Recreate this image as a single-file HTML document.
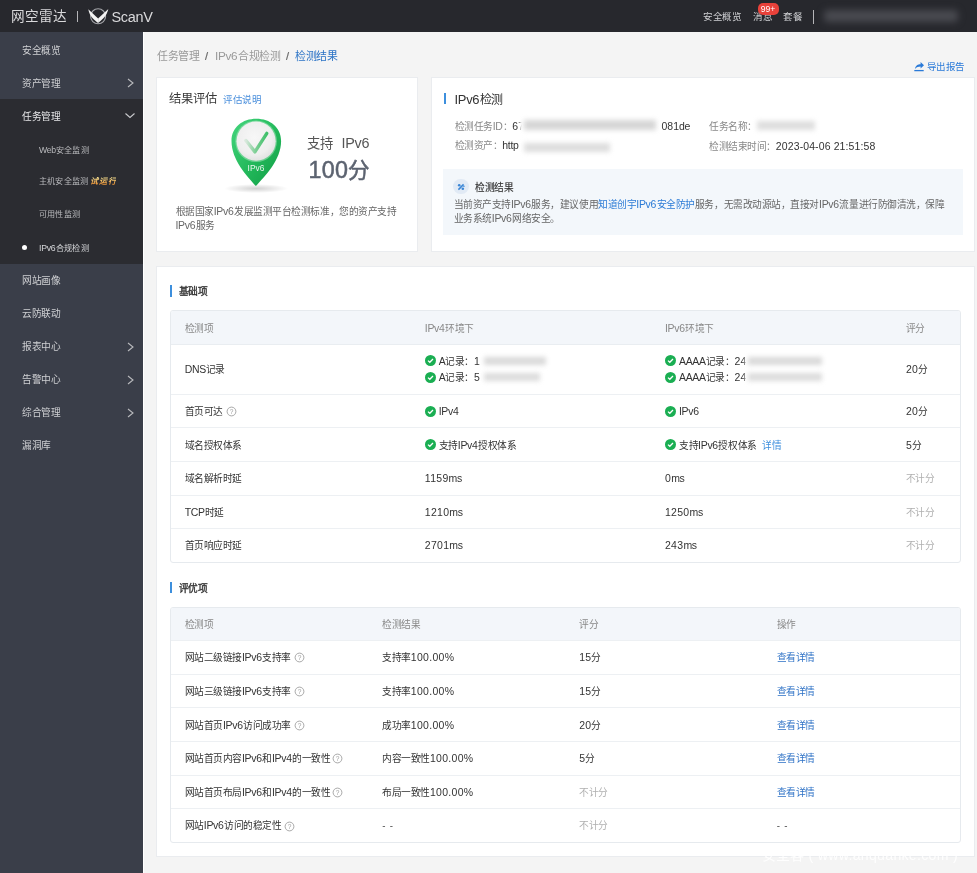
<!DOCTYPE html>
<html lang="zh-CN">
<head>
<meta charset="utf-8">
<style>
*{margin:0;padding:0;box-sizing:border-box;}
html,body{width:977px;height:873px;overflow:hidden;background:#f4f4f4;font-family:"Liberation Sans",sans-serif;}
.a{position:absolute;white-space:nowrap;}
</style>
</head>
<body>
<div style="position:absolute;left:0;top:0;width:977px;height:873px;overflow:hidden;will-change:transform">
<div class="a" style="left:0;top:0;width:977px;height:32px;background:#27282d;"></div>
<div class="a" style="left:11px;top:7.80px;font-size:13.6px;line-height:17px;letter-spacing:0px;color:#d9d9db;">网空雷达</div>
<div class="a" style="left:77px;top:11px;width:1.3px;height:11px;background:#b5b5b8;"></div>
<svg class="a" style="left:84px;top:4px" width="30" height="24" viewBox="0 0 30 24">
<circle cx="14.1" cy="12.3" r="7.5" fill="none" stroke="#a5a6aa" stroke-width="1.1"/>
<path d="M4.3,5.2 L14.1,14.5 L14.1,19.0 C11,16.5 5.5,12.5 4.3,5.2 Z" fill="#f4f4f4"/>
<path d="M24.3,5.1 L14.1,14.5 L14.1,19.0 C17.2,16.5 22.9,12.5 24.3,5.1 Z" fill="#f4f4f4"/>
</svg>
<div class="a" style="left:111.5px;top:9.30px;font-size:13.4px;line-height:17px;letter-spacing:-0.45px;color:#d9d9db;"><span style="letter-spacing:-0.3px;font-size:1.08em">ScanV</span></div>
<div class="a" style="left:703px;top:10.70px;font-size:9.5px;line-height:12px;letter-spacing:-0.45px;color:#cfd0d3;">安全概览</div>
<div class="a" style="left:753px;top:10.70px;font-size:9.5px;line-height:12px;letter-spacing:-0.45px;color:#cfd0d3;">消息</div>
<div class="a" style="left:757.5px;top:2.5px;width:21px;height:12px;background:#e8413a;border-radius:5px;color:#fff;font-size:8.6px;line-height:12px;text-align:center;">99+</div>
<div class="a" style="left:783px;top:10.70px;font-size:9.5px;line-height:12px;letter-spacing:-0.45px;color:#cfd0d3;">套餐</div>
<div class="a" style="left:812.5px;top:9.5px;width:1.3px;height:14px;background:#b5b5b8;"></div>
<div class="a" style="left:824px;top:10px;width:134px;height:12px;background:#494a50;filter:blur(3.5px);border-radius:4px;"></div>
<div class="a" style="left:0;top:32px;width:143px;height:841px;background:#3a3e49;"></div>
<div class="a" style="left:0;top:99px;width:143px;height:165px;background:#2b2c31;"></div>
<div class="a" style="left:143px;top:32px;width:1px;height:841px;background:#fff;"></div>
<div class="a" style="left:22px;top:45.00px;font-size:9.7px;line-height:12px;letter-spacing:-0.45px;color:#cfd0d3;">安全概览</div>
<div class="a" style="left:22px;top:78.00px;font-size:9.7px;line-height:12px;letter-spacing:-0.45px;color:#cfd0d3;">资产管理</div>
<svg class="a" style="left:126px;top:77.0px" width="10" height="12" viewBox="0 0 10 12"><polyline points="2,2 7,6 2,10" fill="none" stroke="#b9babd" stroke-width="1.1"/></svg>
<div class="a" style="left:22px;top:111.00px;font-size:9.7px;line-height:12px;letter-spacing:-0.45px;color:#e6e6e8;">任务管理</div>
<svg class="a" style="left:124px;top:110.0px" width="12" height="12" viewBox="0 0 12 12"><polyline points="1.5,3.5 6,7.5 10.5,3.5" fill="none" stroke="#c9cacd" stroke-width="1.1"/></svg>
<div class="a" style="left:39px;top:143.70px;font-size:8.1px;line-height:12px;letter-spacing:0.2px;color:#b9babd;"><span style="letter-spacing:-0.3px;font-size:1.08em">Web</span>安全监测</div>
<div class="a" style="left:39px;top:176.00px;font-size:8.1px;line-height:12px;letter-spacing:0.2px;color:#b9babd;">主机安全监测</div>
<div class="a" style="left:90.2px;top:176.00px;font-size:8.1px;line-height:12px;letter-spacing:0.7px;color:transparent;font-weight:bold;font-style:italic;background:linear-gradient(#fbe08c 20%,#f3a040 60%,#ef8a2a);-webkit-background-clip:text;background-clip:text;">试运行</div>
<div class="a" style="left:39px;top:209.00px;font-size:8.1px;line-height:12px;letter-spacing:0.2px;color:#b9babd;">可用性监测</div>
<div class="a" style="left:39px;top:242.00px;font-size:8.1px;line-height:12px;letter-spacing:0.2px;color:#d5d6d9;"><span style="letter-spacing:-0.3px;font-size:1.08em">IPv</span><span style="letter-spacing:0.3px;font-size:1.08em">6</span>合规检测</div>
<div class="a" style="left:22px;top:245.3px;width:5px;height:5px;border-radius:50%;background:#fff;"></div>
<div class="a" style="left:22px;top:274.70px;font-size:9.7px;line-height:12px;letter-spacing:-0.45px;color:#cfd0d3;">网站画像</div>
<div class="a" style="left:22px;top:307.70px;font-size:9.7px;line-height:12px;letter-spacing:-0.45px;color:#cfd0d3;">云防联动</div>
<div class="a" style="left:22px;top:340.70px;font-size:9.7px;line-height:12px;letter-spacing:-0.45px;color:#cfd0d3;">报表中心</div>
<svg class="a" style="left:126px;top:340.5px" width="10" height="12" viewBox="0 0 10 12"><polyline points="2,2 7,6 2,10" fill="none" stroke="#b9babd" stroke-width="1.1"/></svg>
<div class="a" style="left:22px;top:373.70px;font-size:9.7px;line-height:12px;letter-spacing:-0.45px;color:#cfd0d3;">告警中心</div>
<svg class="a" style="left:126px;top:373.5px" width="10" height="12" viewBox="0 0 10 12"><polyline points="2,2 7,6 2,10" fill="none" stroke="#b9babd" stroke-width="1.1"/></svg>
<div class="a" style="left:22px;top:406.70px;font-size:9.7px;line-height:12px;letter-spacing:-0.45px;color:#cfd0d3;">综合管理</div>
<svg class="a" style="left:126px;top:406.5px" width="10" height="12" viewBox="0 0 10 12"><polyline points="2,2 7,6 2,10" fill="none" stroke="#b9babd" stroke-width="1.1"/></svg>
<div class="a" style="left:22px;top:439.70px;font-size:9.7px;line-height:12px;letter-spacing:-0.45px;color:#cfd0d3;">漏洞库</div>
<div class="a" style="left:157px;top:49.30px;font-size:10.9px;line-height:14px;letter-spacing:-0.45px;color:#999;">任务管理</div>
<div class="a" style="left:205px;top:49.30px;font-size:11px;line-height:14px;letter-spacing:-0.45px;color:#666;-webkit-text-stroke:0.2px #666;">/</div>
<div class="a" style="left:215px;top:49.30px;font-size:10.9px;line-height:14px;letter-spacing:-0.45px;color:#999;"><span style="letter-spacing:-0.3px;font-size:1.08em">IPv</span><span style="letter-spacing:0.3px;font-size:1.08em">6</span>合规检测</div>
<div class="a" style="left:286px;top:49.30px;font-size:11px;line-height:14px;letter-spacing:-0.45px;color:#666;-webkit-text-stroke:0.2px #666;">/</div>
<div class="a" style="left:295.3px;top:49.30px;font-size:10.9px;line-height:14px;letter-spacing:-0.45px;color:#2b73c6;">检测结果</div>
<svg class="a" style="left:913px;top:60px" width="12" height="12" viewBox="0 0 12 12">
<path d="M1.3,10.6 L10.7,10.6" stroke="#2a7ad8" stroke-width="1.3"/>
<path d="M2,9 C2.5,5.5 5,4.2 7.6,4.2 L7.6,2 L11,5.3 L7.6,8.6 L7.6,6.4 C5.5,6.4 3.5,7 2,9 Z" fill="#2a7ad8"/>
</svg>
<div class="a" style="left:926.8px;top:61.30px;font-size:9.5px;line-height:12px;letter-spacing:-0.45px;color:#2a7ad8;">导出报告</div>
<div class="a" style="left:156px;top:77px;width:262px;height:175px;background:#fff;border:1px solid #eaecef;"></div>
<div class="a" style="left:168.6px;top:91.70px;font-size:12.3px;line-height:15px;letter-spacing:0.15px;color:#3a3a3a;">结果评估</div>
<div class="a" style="left:223.3px;top:93.60px;font-size:9.5px;line-height:12px;letter-spacing:-0.45px;color:#4a8fdc;">评估说明</div>
<svg class="a" style="left:215px;top:110px" width="82" height="86" viewBox="0 0 82 86">
<defs>
<linearGradient id="pg" x1="0" y1="0" x2="1" y2="1">
<stop offset="0" stop-color="#45d67e"/><stop offset="0.55" stop-color="#22b85a"/><stop offset="1" stop-color="#119c45"/>
</linearGradient>
<radialGradient id="wg" cx="0.45" cy="0.4" r="0.6">
<stop offset="0" stop-color="#f7f7f7"/><stop offset="0.75" stop-color="#eeeeee"/><stop offset="1" stop-color="#e2e2e2"/>
</radialGradient>
<linearGradient id="cg" x1="0" y1="0" x2="1" y2="0">
<stop offset="0" stop-color="#d8e8dc"/><stop offset="0.45" stop-color="#7fcf96"/><stop offset="1" stop-color="#3fc06a"/>
</linearGradient>
<radialGradient id="sg" cx="0.5" cy="0.5" r="0.5">
<stop offset="0" stop-color="#000" stop-opacity="0.18"/><stop offset="1" stop-color="#000" stop-opacity="0"/>
</radialGradient>
</defs>
<ellipse cx="41" cy="78.5" rx="32" ry="4.5" fill="url(#sg)"/>
<path d="M40.9,76.1 C32,66 16.5,50 16.5,31 C16.5,17 27.5,8.65 41.3,8.65 C55,8.65 66.1,17 66.1,31 C66.1,50 50,66 40.9,76.1 Z" fill="url(#pg)"/>
<circle cx="41.1" cy="31.2" r="20.8" fill="#a8e6bd" opacity="0.55"/>
<circle cx="41.1" cy="31.2" r="19.6" fill="url(#wg)"/>
<path d="M30.9,30.5 L39.9,41.9 L51.8,23.4" fill="none" stroke="url(#cg)" stroke-width="3.4" stroke-linejoin="round" stroke-linecap="round"/>
<text x="41" y="61.4" font-size="8.4" text-anchor="middle" fill="#fff" fill-opacity="0.9" font-family="Liberation Sans">IPv6</text>
</svg>
<div class="a" style="left:307px;top:135.20px;font-size:13.3px;line-height:16px;letter-spacing:-0.2px;color:#555;">支持<span style="display:inline-block;width:9px"></span><span style="letter-spacing:-0.3px;font-size:1.08em">IPv</span><span style="letter-spacing:0.3px;font-size:1.08em">6</span></div>
<div class="a" style="left:308.5px;top:157.50px;font-size:21.6px;line-height:24px;letter-spacing:-0.45px;color:#5c6370;-webkit-text-stroke:0.5px #5c6370;"><span style="letter-spacing:0.3px;font-size:1.08em">100</span>分</div>
<div class="a" style="left:175.5px;top:206.30px;font-size:9.7px;line-height:12px;letter-spacing:-0.45px;color:#666;">根据国家<span style="letter-spacing:-0.3px;font-size:1.08em">IPv</span><span style="letter-spacing:0.3px;font-size:1.08em">6</span>发展监测平台检测标准，您的资产支持</div>
<div class="a" style="left:175.5px;top:220.20px;font-size:9.7px;line-height:12px;letter-spacing:-0.45px;color:#666;"><span style="letter-spacing:-0.3px;font-size:1.08em">IPv</span><span style="letter-spacing:0.3px;font-size:1.08em">6</span>服务</div>
<div class="a" style="left:431px;top:77px;width:544px;height:175px;background:#fff;border:1px solid #eaecef;"></div>
<div class="a" style="left:444px;top:92.8px;width:2px;height:11px;background:#3d8fdd;"></div>
<div class="a" style="left:454.5px;top:91.70px;font-size:12px;line-height:15px;letter-spacing:-0.45px;color:#333;"><span style="letter-spacing:-0.3px;font-size:1.08em">IPv</span><span style="letter-spacing:0.3px;font-size:1.08em">6</span>检测</div>
<div class="a" style="left:454.5px;top:120.50px;font-size:9.7px;line-height:12px;letter-spacing:-0.45px;color:#888;">检测任务<span style="letter-spacing:-0.3px;font-size:1.08em">ID</span>：<span style="color:#333"><span style="letter-spacing:0.3px;font-size:1.08em">67</span></span></div>
<div class="a" style="left:454.5px;top:140.30px;font-size:9.7px;line-height:12px;letter-spacing:-0.45px;color:#888;">检测资产：<span style="color:#333"><span style="letter-spacing:-0.3px;font-size:1.08em">http</span></span></div>
<div class="a" style="left:520px;top:112px;width:141px;height:29px;background:#fff;filter:blur(1px);"></div>
<div class="a" style="left:524px;top:120px;width:132px;height:10px;background:#d6d6d6;filter:blur(2.5px);"></div>
<div class="a" style="left:661.5px;top:120.50px;font-size:9.7px;line-height:12px;letter-spacing:-0.45px;color:#333;"><span style="letter-spacing:0px;font-size:1.08em">081</span><span style="letter-spacing:-0.3px;font-size:1.08em">de</span></div>
<div class="a" style="left:520px;top:141px;width:94px;height:14px;background:#fff;filter:blur(1px);"></div>
<div class="a" style="left:524px;top:142.5px;width:86px;height:9px;background:#dddddd;filter:blur(2.5px);"></div>
<div class="a" style="left:709px;top:120.50px;font-size:9.7px;line-height:12px;letter-spacing:-0.45px;color:#888;">任务名称：</div>
<div class="a" style="left:753px;top:116px;width:66px;height:18px;background:#fff;filter:blur(1px);"></div>
<div class="a" style="left:757px;top:120.5px;width:58px;height:9px;background:#dedede;filter:blur(2.5px);"></div>
<div class="a" style="left:709px;top:140.50px;font-size:9.7px;line-height:12px;letter-spacing:-0.45px;color:#888;">检测结束时间：<span style="color:#333"><span style="letter-spacing:0.12px;font-size:1.08em">2023-04-06 21:51:58</span></span></div>
<div class="a" style="left:443px;top:168.8px;width:520px;height:66px;background:#f3f7fb;"></div>
<div class="a" style="left:453px;top:178.8px;width:15.6px;height:15.6px;border-radius:50%;background:#e1eaf5;"></div>
<svg class="a" style="left:456px;top:181.8px" width="10" height="10" viewBox="0 0 10 10">
<path d="M7.6,2.4 L2.4,7.6" stroke="#3a86d6" stroke-width="1.5"/><circle cx="3.2" cy="3.2" r="1.3" fill="#3a86d6"/><circle cx="6.8" cy="6.8" r="1.3" fill="#3a86d6"/><circle cx="7.9" cy="4.2" r="0.8" fill="#3a86d6"/>
</svg>
<div class="a" style="left:475.3px;top:182.30px;font-size:9.7px;line-height:12px;letter-spacing:-0.45px;color:#333;-webkit-text-stroke:0.15px #333;">检测结果</div>
<div class="a" style="left:453.6px;top:198.80px;font-size:9.7px;line-height:12px;letter-spacing:-0.45px;color:#666;">当前资产支持<span style="letter-spacing:-0.3px;font-size:1.08em">IPv</span><span style="letter-spacing:0.3px;font-size:1.08em">6</span>服务，建议使用<span style="color:#2b7bd6">知道创宇<span style="letter-spacing:-0.3px;font-size:1.08em">IPv</span><span style="letter-spacing:0.3px;font-size:1.08em">6</span>安全防护</span>服务，无需改动源站，直接对<span style="letter-spacing:-0.3px;font-size:1.08em">IPv</span><span style="letter-spacing:0.3px;font-size:1.08em">6</span>流量进行防御清洗，保障</div>
<div class="a" style="left:453.6px;top:212.90px;font-size:9.7px;line-height:12px;letter-spacing:-0.45px;color:#666;">业务系统<span style="letter-spacing:-0.3px;font-size:1.08em">IPv</span><span style="letter-spacing:0.3px;font-size:1.08em">6</span>网络安全。</div>
<div class="a" style="left:156px;top:266px;width:819px;height:591px;background:#fff;border:1px solid #eaecef;"></div>
<div class="a" style="left:170px;top:285.3px;width:2px;height:11.3px;background:#3d8fdd;"></div>
<div class="a" style="left:178.9px;top:286.00px;font-size:9.7px;line-height:12px;letter-spacing:-0.45px;color:#333;-webkit-text-stroke:0.35px #333;">基础项</div>
<div class="a" style="left:170px;top:582px;width:2px;height:11.3px;background:#3d8fdd;"></div>
<div class="a" style="left:178.6px;top:582.80px;font-size:9.7px;line-height:12px;letter-spacing:-0.45px;color:#333;-webkit-text-stroke:0.35px #333;">评优项</div>
<div class="a" style="left:170px;top:310px;width:791px;height:253.00000000000006px;border:1px solid #e6eaee;border-radius:3px;background:#fff;"></div>
<div class="a" style="left:171px;top:311px;width:789px;height:33.5px;background:#f3f6fa;border-radius:2px 2px 0 0;"></div>
<div class="a" style="left:171px;top:344.0px;width:789px;height:1px;background:#e9edf1;"></div>
<div class="a" style="left:171px;top:393.7px;width:789px;height:1px;background:#edf0f3;"></div>
<div class="a" style="left:171px;top:427.3px;width:789px;height:1px;background:#edf0f3;"></div>
<div class="a" style="left:171px;top:460.9px;width:789px;height:1px;background:#edf0f3;"></div>
<div class="a" style="left:171px;top:494.5px;width:789px;height:1px;background:#edf0f3;"></div>
<div class="a" style="left:171px;top:528.1px;width:789px;height:1px;background:#edf0f3;"></div>
<div class="a" style="left:184.7px;top:322.50px;font-size:9.7px;line-height:12px;letter-spacing:-0.45px;color:#888;">检测项</div>
<div class="a" style="left:424.8px;top:322.50px;font-size:9.7px;line-height:12px;letter-spacing:-0.45px;color:#888;"><span style="letter-spacing:-0.3px;font-size:1.08em">IPv</span><span style="letter-spacing:0.3px;font-size:1.08em">4</span>环境下</div>
<div class="a" style="left:665px;top:322.50px;font-size:9.7px;line-height:12px;letter-spacing:-0.45px;color:#888;"><span style="letter-spacing:-0.3px;font-size:1.08em">IPv</span><span style="letter-spacing:0.3px;font-size:1.08em">6</span>环境下</div>
<div class="a" style="left:905.9px;top:322.50px;font-size:9.7px;line-height:12px;letter-spacing:-0.45px;color:#888;">评分</div>
<div class="a" style="left:184.7px;top:364.40px;font-size:9.7px;line-height:12px;letter-spacing:-0.45px;color:#333;"><span style="letter-spacing:-0.3px;font-size:1.08em">DNS</span>记录</div>
<svg class="a" style="left:424.8px;top:355.4px" width="11" height="11" viewBox="0 0 11 11"><circle cx="5.5" cy="5.5" r="5.5" fill="#1aae52"/><polyline points="3,5.6 4.8,7.3 8,4" fill="none" stroke="#fff" stroke-width="1.3"/></svg>
<div class="a" style="left:438.7px;top:355.90px;font-size:9.7px;line-height:12px;letter-spacing:-0.45px;color:#333;"><span style="letter-spacing:-0.3px;font-size:1.08em">A</span>记录：<span style="letter-spacing:0.3px;font-size:1.08em">1</span></div>
<svg class="a" style="left:424.8px;top:371.7px" width="11" height="11" viewBox="0 0 11 11"><circle cx="5.5" cy="5.5" r="5.5" fill="#1aae52"/><polyline points="3,5.6 4.8,7.3 8,4" fill="none" stroke="#fff" stroke-width="1.3"/></svg>
<div class="a" style="left:438.7px;top:372.20px;font-size:9.7px;line-height:12px;letter-spacing:-0.45px;color:#333;"><span style="letter-spacing:-0.3px;font-size:1.08em">A</span>记录：<span style="letter-spacing:0.3px;font-size:1.08em">5</span></div>
<div class="a" style="left:480.5px;top:352.7px;width:70.5px;height:30.3px;background:#fff;filter:blur(1px);"></div>
<div class="a" style="left:484px;top:356.5px;width:62px;height:8.5px;background:#d9d9d9;filter:blur(2.5px);"></div>
<div class="a" style="left:484px;top:372.8px;width:56px;height:8.5px;background:#dcdcdc;filter:blur(2.5px);"></div>
<svg class="a" style="left:665px;top:355.4px" width="11" height="11" viewBox="0 0 11 11"><circle cx="5.5" cy="5.5" r="5.5" fill="#1aae52"/><polyline points="3,5.6 4.8,7.3 8,4" fill="none" stroke="#fff" stroke-width="1.3"/></svg>
<div class="a" style="left:679px;top:355.90px;font-size:9.7px;line-height:12px;letter-spacing:-0.45px;color:#333;"><span style="letter-spacing:-0.3px;font-size:1.08em">AAAA</span>记录：<span style="letter-spacing:0.3px;font-size:1.08em">24</span></div>
<svg class="a" style="left:665px;top:371.7px" width="11" height="11" viewBox="0 0 11 11"><circle cx="5.5" cy="5.5" r="5.5" fill="#1aae52"/><polyline points="3,5.6 4.8,7.3 8,4" fill="none" stroke="#fff" stroke-width="1.3"/></svg>
<div class="a" style="left:679px;top:372.20px;font-size:9.7px;line-height:12px;letter-spacing:-0.45px;color:#333;"><span style="letter-spacing:-0.3px;font-size:1.08em">AAAA</span>记录：<span style="letter-spacing:0.3px;font-size:1.08em">24</span></div>
<div class="a" style="left:745px;top:352.4px;width:81px;height:30px;background:#fff;filter:blur(1px);"></div>
<div class="a" style="left:748px;top:356.5px;width:74px;height:8.5px;background:#d9d9d9;filter:blur(2.5px);"></div>
<div class="a" style="left:748px;top:372.8px;width:74px;height:8.5px;background:#dcdcdc;filter:blur(2.5px);"></div>
<div class="a" style="left:905.9px;top:364.40px;font-size:9.7px;line-height:12px;letter-spacing:-0.45px;color:#333;"><span style="letter-spacing:0.3px;font-size:1.08em">20</span>分</div>
<div class="a" style="left:184.7px;top:406.00px;font-size:9.7px;line-height:12px;letter-spacing:-0.45px;color:#333;">首页可达</div>
<svg class="a" style="left:226.1px;top:406.0px" width="11" height="11" viewBox="0 0 11 11"><circle cx="5.5" cy="5.5" r="4.4" fill="none" stroke="#9a9a9a" stroke-width="0.85"/><text x="5.5" y="7.9" font-size="6.6" text-anchor="middle" fill="#9a9a9a" font-family="Liberation Sans">?</text></svg>
<svg class="a" style="left:424.8px;top:405.5px" width="11" height="11" viewBox="0 0 11 11"><circle cx="5.5" cy="5.5" r="5.5" fill="#1aae52"/><polyline points="3,5.6 4.8,7.3 8,4" fill="none" stroke="#fff" stroke-width="1.3"/></svg>
<div class="a" style="left:438.7px;top:406.00px;font-size:9.7px;line-height:12px;letter-spacing:-0.45px;color:#333;"><span style="letter-spacing:-0.3px;font-size:1.08em">IPv</span><span style="letter-spacing:0.3px;font-size:1.08em">4</span></div>
<svg class="a" style="left:665px;top:405.5px" width="11" height="11" viewBox="0 0 11 11"><circle cx="5.5" cy="5.5" r="5.5" fill="#1aae52"/><polyline points="3,5.6 4.8,7.3 8,4" fill="none" stroke="#fff" stroke-width="1.3"/></svg>
<div class="a" style="left:679px;top:406.00px;font-size:9.7px;line-height:12px;letter-spacing:-0.45px;color:#333;"><span style="letter-spacing:-0.3px;font-size:1.08em">IPv</span><span style="letter-spacing:0.3px;font-size:1.08em">6</span></div>
<div class="a" style="left:905.9px;top:406.00px;font-size:9.7px;line-height:12px;letter-spacing:-0.45px;color:#333;"><span style="letter-spacing:0.3px;font-size:1.08em">20</span>分</div>
<div class="a" style="left:184.7px;top:439.60px;font-size:9.7px;line-height:12px;letter-spacing:-0.45px;color:#333;">域名授权体系</div>
<svg class="a" style="left:424.8px;top:439.1px" width="11" height="11" viewBox="0 0 11 11"><circle cx="5.5" cy="5.5" r="5.5" fill="#1aae52"/><polyline points="3,5.6 4.8,7.3 8,4" fill="none" stroke="#fff" stroke-width="1.3"/></svg>
<div class="a" style="left:438.7px;top:439.60px;font-size:9.7px;line-height:12px;letter-spacing:-0.45px;color:#333;">支持<span style="letter-spacing:-0.3px;font-size:1.08em">IPv</span><span style="letter-spacing:0.3px;font-size:1.08em">4</span>授权体系</div>
<svg class="a" style="left:665px;top:439.1px" width="11" height="11" viewBox="0 0 11 11"><circle cx="5.5" cy="5.5" r="5.5" fill="#1aae52"/><polyline points="3,5.6 4.8,7.3 8,4" fill="none" stroke="#fff" stroke-width="1.3"/></svg>
<div class="a" style="left:679px;top:439.60px;font-size:9.7px;line-height:12px;letter-spacing:-0.45px;color:#333;">支持<span style="letter-spacing:-0.3px;font-size:1.08em">IPv</span><span style="letter-spacing:0.3px;font-size:1.08em">6</span>授权体系</div>
<div class="a" style="left:762px;top:439.60px;font-size:9.7px;line-height:12px;letter-spacing:-0.45px;color:#3d8fdd;">详情</div>
<div class="a" style="left:905.9px;top:439.60px;font-size:9.7px;line-height:12px;letter-spacing:-0.45px;color:#333;"><span style="letter-spacing:0.3px;font-size:1.08em">5</span>分</div>
<div class="a" style="left:184.7px;top:473.20px;font-size:9.7px;line-height:12px;letter-spacing:-0.45px;color:#333;">域名解析时延</div>
<div class="a" style="left:424.8px;top:473.20px;font-size:9.7px;line-height:12px;letter-spacing:-0.45px;color:#333;"><span style="letter-spacing:0.3px;font-size:1.08em">1159</span><span style="letter-spacing:-0.3px;font-size:1.08em">ms</span></div>
<div class="a" style="left:665px;top:473.20px;font-size:9.7px;line-height:12px;letter-spacing:-0.45px;color:#333;"><span style="letter-spacing:0.3px;font-size:1.08em">0</span><span style="letter-spacing:-0.3px;font-size:1.08em">ms</span></div>
<div class="a" style="left:905.9px;top:473.20px;font-size:9.7px;line-height:12px;letter-spacing:-0.45px;color:#b0b0b0;">不计分</div>
<div class="a" style="left:184.7px;top:506.80px;font-size:9.7px;line-height:12px;letter-spacing:-0.45px;color:#333;"><span style="letter-spacing:-0.3px;font-size:1.08em">TCP</span>时延</div>
<div class="a" style="left:424.8px;top:506.80px;font-size:9.7px;line-height:12px;letter-spacing:-0.45px;color:#333;"><span style="letter-spacing:0.3px;font-size:1.08em">1210</span><span style="letter-spacing:-0.3px;font-size:1.08em">ms</span></div>
<div class="a" style="left:665px;top:506.80px;font-size:9.7px;line-height:12px;letter-spacing:-0.45px;color:#333;"><span style="letter-spacing:0.3px;font-size:1.08em">1250</span><span style="letter-spacing:-0.3px;font-size:1.08em">ms</span></div>
<div class="a" style="left:905.9px;top:506.80px;font-size:9.7px;line-height:12px;letter-spacing:-0.45px;color:#b0b0b0;">不计分</div>
<div class="a" style="left:184.7px;top:540.40px;font-size:9.7px;line-height:12px;letter-spacing:-0.45px;color:#333;">首页响应时延</div>
<div class="a" style="left:424.8px;top:540.40px;font-size:9.7px;line-height:12px;letter-spacing:-0.45px;color:#333;"><span style="letter-spacing:0.3px;font-size:1.08em">2701</span><span style="letter-spacing:-0.3px;font-size:1.08em">ms</span></div>
<div class="a" style="left:665px;top:540.40px;font-size:9.7px;line-height:12px;letter-spacing:-0.45px;color:#333;"><span style="letter-spacing:0.3px;font-size:1.08em">243</span><span style="letter-spacing:-0.3px;font-size:1.08em">ms</span></div>
<div class="a" style="left:905.9px;top:540.40px;font-size:9.7px;line-height:12px;letter-spacing:-0.45px;color:#b0b0b0;">不计分</div>
<div class="a" style="left:170px;top:606.5px;width:791px;height:236.50000000000006px;border:1px solid #e6eaee;border-radius:3px;background:#fff;"></div>
<div class="a" style="left:171px;top:607.5px;width:789px;height:33.0px;background:#f3f6fa;border-radius:2px 2px 0 0;"></div>
<div class="a" style="left:171px;top:640.0px;width:789px;height:1px;background:#e9edf1;"></div>
<div class="a" style="left:171px;top:640.0px;width:789px;height:1px;background:#edf0f3;"></div>
<div class="a" style="left:171px;top:673.7px;width:789px;height:1px;background:#edf0f3;"></div>
<div class="a" style="left:171px;top:707.3px;width:789px;height:1px;background:#edf0f3;"></div>
<div class="a" style="left:171px;top:740.9px;width:789px;height:1px;background:#edf0f3;"></div>
<div class="a" style="left:171px;top:774.5px;width:789px;height:1px;background:#edf0f3;"></div>
<div class="a" style="left:171px;top:808.1px;width:789px;height:1px;background:#edf0f3;"></div>
<div class="a" style="left:184.7px;top:618.50px;font-size:9.7px;line-height:12px;letter-spacing:-0.45px;color:#888;">检测项</div>
<div class="a" style="left:382.2px;top:618.50px;font-size:9.7px;line-height:12px;letter-spacing:-0.45px;color:#888;">检测结果</div>
<div class="a" style="left:579.2px;top:618.50px;font-size:9.7px;line-height:12px;letter-spacing:-0.45px;color:#888;">评分</div>
<div class="a" style="left:776.8px;top:618.50px;font-size:9.7px;line-height:12px;letter-spacing:-0.45px;color:#888;">操作</div>
<div class="a" style="left:184.7px;top:652.35px;font-size:9.7px;line-height:12px;letter-spacing:-0.45px;color:#333;">网站二级链接<span style="letter-spacing:-0.3px;font-size:1.08em">IPv</span><span style="letter-spacing:0.3px;font-size:1.08em">6</span>支持率</div>
<svg class="a" style="left:293.6px;top:652.45px" width="11" height="11" viewBox="0 0 11 11"><circle cx="5.5" cy="5.5" r="4.4" fill="none" stroke="#9a9a9a" stroke-width="0.85"/><text x="5.5" y="7.9" font-size="6.6" text-anchor="middle" fill="#9a9a9a" font-family="Liberation Sans">?</text></svg>
<div class="a" style="left:382.2px;top:652.35px;font-size:9.7px;line-height:12px;letter-spacing:-0.45px;color:#333;">支持率<span style="letter-spacing:0.3px;font-size:1.08em">100.00%</span></div>
<div class="a" style="left:579.2px;top:652.35px;font-size:9.7px;line-height:12px;letter-spacing:-0.45px;color:#333;"><span style="letter-spacing:0.3px;font-size:1.08em">15</span>分</div>
<div class="a" style="left:776.8px;top:652.35px;font-size:9.7px;line-height:12px;letter-spacing:-0.45px;color:#2e72c6;">查看详情</div>
<div class="a" style="left:184.7px;top:686.00px;font-size:9.7px;line-height:12px;letter-spacing:-0.45px;color:#333;">网站三级链接<span style="letter-spacing:-0.3px;font-size:1.08em">IPv</span><span style="letter-spacing:0.3px;font-size:1.08em">6</span>支持率</div>
<svg class="a" style="left:293.6px;top:686.1px" width="11" height="11" viewBox="0 0 11 11"><circle cx="5.5" cy="5.5" r="4.4" fill="none" stroke="#9a9a9a" stroke-width="0.85"/><text x="5.5" y="7.9" font-size="6.6" text-anchor="middle" fill="#9a9a9a" font-family="Liberation Sans">?</text></svg>
<div class="a" style="left:382.2px;top:686.00px;font-size:9.7px;line-height:12px;letter-spacing:-0.45px;color:#333;">支持率<span style="letter-spacing:0.3px;font-size:1.08em">100.00%</span></div>
<div class="a" style="left:579.2px;top:686.00px;font-size:9.7px;line-height:12px;letter-spacing:-0.45px;color:#333;"><span style="letter-spacing:0.3px;font-size:1.08em">15</span>分</div>
<div class="a" style="left:776.8px;top:686.00px;font-size:9.7px;line-height:12px;letter-spacing:-0.45px;color:#2e72c6;">查看详情</div>
<div class="a" style="left:184.7px;top:719.60px;font-size:9.7px;line-height:12px;letter-spacing:-0.45px;color:#333;">网站首页<span style="letter-spacing:-0.3px;font-size:1.08em">IPv</span><span style="letter-spacing:0.3px;font-size:1.08em">6</span>访问成功率</div>
<svg class="a" style="left:293.6px;top:719.6999999999999px" width="11" height="11" viewBox="0 0 11 11"><circle cx="5.5" cy="5.5" r="4.4" fill="none" stroke="#9a9a9a" stroke-width="0.85"/><text x="5.5" y="7.9" font-size="6.6" text-anchor="middle" fill="#9a9a9a" font-family="Liberation Sans">?</text></svg>
<div class="a" style="left:382.2px;top:719.60px;font-size:9.7px;line-height:12px;letter-spacing:-0.45px;color:#333;">成功率<span style="letter-spacing:0.3px;font-size:1.08em">100.00%</span></div>
<div class="a" style="left:579.2px;top:719.60px;font-size:9.7px;line-height:12px;letter-spacing:-0.45px;color:#333;"><span style="letter-spacing:0.3px;font-size:1.08em">20</span>分</div>
<div class="a" style="left:776.8px;top:719.60px;font-size:9.7px;line-height:12px;letter-spacing:-0.45px;color:#2e72c6;">查看详情</div>
<div class="a" style="left:184.7px;top:753.20px;font-size:9.7px;line-height:12px;letter-spacing:-0.45px;color:#333;">网站首页内容<span style="letter-spacing:-0.3px;font-size:1.08em">IPv</span><span style="letter-spacing:0.3px;font-size:1.08em">6</span>和<span style="letter-spacing:-0.3px;font-size:1.08em">IPv</span><span style="letter-spacing:0.3px;font-size:1.08em">4</span>的一致性</div>
<svg class="a" style="left:332.4px;top:753.3000000000001px" width="11" height="11" viewBox="0 0 11 11"><circle cx="5.5" cy="5.5" r="4.4" fill="none" stroke="#9a9a9a" stroke-width="0.85"/><text x="5.5" y="7.9" font-size="6.6" text-anchor="middle" fill="#9a9a9a" font-family="Liberation Sans">?</text></svg>
<div class="a" style="left:382.2px;top:753.20px;font-size:9.7px;line-height:12px;letter-spacing:-0.45px;color:#333;">内容一致性<span style="letter-spacing:0.3px;font-size:1.08em">100.00%</span></div>
<div class="a" style="left:579.2px;top:753.20px;font-size:9.7px;line-height:12px;letter-spacing:-0.45px;color:#333;"><span style="letter-spacing:0.3px;font-size:1.08em">5</span>分</div>
<div class="a" style="left:776.8px;top:753.20px;font-size:9.7px;line-height:12px;letter-spacing:-0.45px;color:#2e72c6;">查看详情</div>
<div class="a" style="left:184.7px;top:786.80px;font-size:9.7px;line-height:12px;letter-spacing:-0.45px;color:#333;">网站首页布局<span style="letter-spacing:-0.3px;font-size:1.08em">IPv</span><span style="letter-spacing:0.3px;font-size:1.08em">6</span>和<span style="letter-spacing:-0.3px;font-size:1.08em">IPv</span><span style="letter-spacing:0.3px;font-size:1.08em">4</span>的一致性</div>
<svg class="a" style="left:332.4px;top:786.9px" width="11" height="11" viewBox="0 0 11 11"><circle cx="5.5" cy="5.5" r="4.4" fill="none" stroke="#9a9a9a" stroke-width="0.85"/><text x="5.5" y="7.9" font-size="6.6" text-anchor="middle" fill="#9a9a9a" font-family="Liberation Sans">?</text></svg>
<div class="a" style="left:382.2px;top:786.80px;font-size:9.7px;line-height:12px;letter-spacing:-0.45px;color:#333;">布局一致性<span style="letter-spacing:0.3px;font-size:1.08em">100.00%</span></div>
<div class="a" style="left:579.2px;top:786.80px;font-size:9.7px;line-height:12px;letter-spacing:-0.45px;color:#b0b0b0;">不计分</div>
<div class="a" style="left:776.8px;top:786.80px;font-size:9.7px;line-height:12px;letter-spacing:-0.45px;color:#2e72c6;">查看详情</div>
<div class="a" style="left:184.7px;top:820.40px;font-size:9.7px;line-height:12px;letter-spacing:-0.45px;color:#333;">网站<span style="letter-spacing:-0.3px;font-size:1.08em">IPv</span><span style="letter-spacing:0.3px;font-size:1.08em">6</span>访问的稳定性</div>
<svg class="a" style="left:283.5px;top:820.5000000000001px" width="11" height="11" viewBox="0 0 11 11"><circle cx="5.5" cy="5.5" r="4.4" fill="none" stroke="#9a9a9a" stroke-width="0.85"/><text x="5.5" y="7.9" font-size="6.6" text-anchor="middle" fill="#9a9a9a" font-family="Liberation Sans">?</text></svg>
<div class="a" style="left:382.2px;top:820.40px;font-size:9.7px;line-height:12px;letter-spacing:0.8px;color:#333;">- -</div>
<div class="a" style="left:579.2px;top:820.40px;font-size:9.7px;line-height:12px;letter-spacing:-0.45px;color:#b0b0b0;">不计分</div>
<div class="a" style="left:776.8px;top:820.40px;font-size:9.7px;line-height:12px;letter-spacing:0.8px;color:#333;">- -</div>
<div class="a" style="left:761.5px;top:847.30px;font-size:14.1px;line-height:16px;letter-spacing:0.3px;color:rgba(255,255,255,0.9);">安全客 ( www.anquanke.com )</div>
</div>
</body>
</html>
